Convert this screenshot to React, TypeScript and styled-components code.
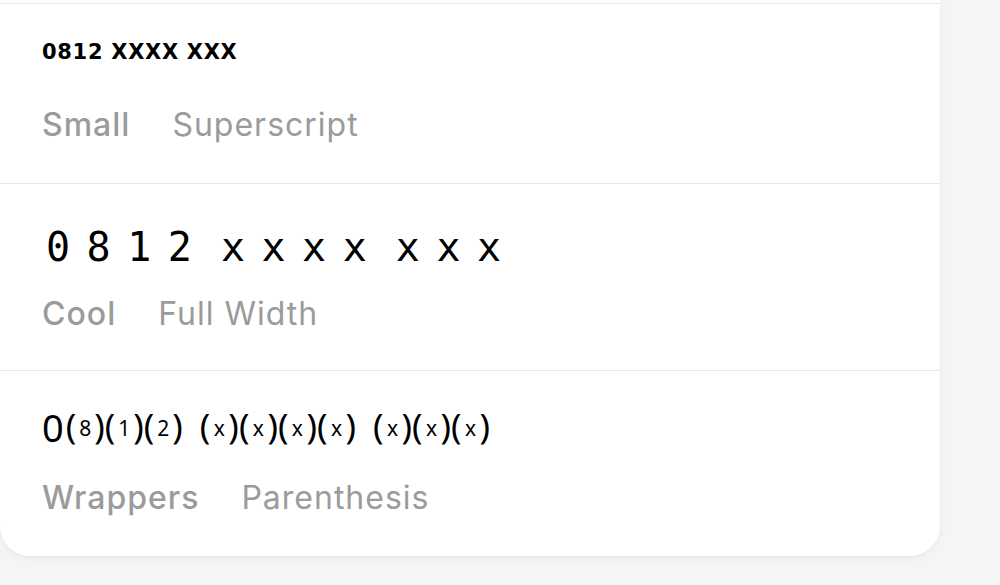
import styled, { createGlobalStyle } from "styled-components";

/*********************  ESTILOS  *********************/
const GlobalStyle = createGlobalStyle`
  html, body {
    margin: 0;
    padding: 0;
    background: #f5f5f5;
  }
  body {
    font-family: "Inter", "Noto Sans", sans-serif;
  }
`;

const Page = styled.div`
  width: 1000px;
  height: 585px;
  overflow: hidden;
  background: #f5f5f5;
`;

const Card = styled.div`
  width: 940px;
  background: #ffffff;
  border-radius: 0 0 30px 30px;
  box-shadow: 0 2px 6px rgba(0, 0, 0, 0.06);
  display: flex;
  flex-direction: column;
`;

const Row = styled.div<{ $top: number; $bottom: number }>`
  border-top: 1px solid #e6e6e6;
  padding: ${(p) => p.$top}px 42px ${(p) => p.$bottom}px;
  display: flex;
  flex-direction: column;
  align-items: flex-start;

  &:first-child {
    margin-top: 3px;
  }
`;

const SmallValue = styled.div`
  font-family: "DejaVu Sans", sans-serif;
  font-weight: 700;
  font-size: 21px;
  line-height: 24px;
  letter-spacing: 0.7px;
  padding-top: 1px;
  color: #000;
`;

const WideValue = styled.div`
  font-family: "DejaVu Sans Mono", monospace;
  font-size: 40px;
  line-height: 46px;
  letter-spacing: 16.5px;
  word-spacing: -28px;
  padding-left: 4px;
  color: #000;
`;

const WrapValue = styled.div`
  font-family: "Noto Sans", sans-serif;
  font-size: 38px;
  line-height: 52px;
  height: 52px;
  white-space: nowrap;
  color: #000;
`;

const Group = styled.span`
  margin-left: 17px;

  &:first-of-type {
    margin-left: 2px;
  }
`;

const Enclosed = styled.span`
  font-size: 35px;
  font-weight: 400;
  line-height: 20px;
  vertical-align: 3px;
`;

const Inner = styled.span`
  display: inline-block;
  width: 18px;
  text-align: center;
  font-size: 21px;
  font-weight: 400;
  line-height: 20px;
  vertical-align: 3px;
`;

const Labels = styled.div<{ $gap: number }>`
  margin-top: ${(p) => p.$gap}px;
  display: flex;
  gap: 42px;
  line-height: 38px;
`;

const Label = styled.span<{ $strong?: boolean }>`
  font-family: "Inter", sans-serif;
  font-size: 32px;
  font-weight: ${(p) => (p.$strong ? 500 : 400)};
  letter-spacing: 1px;
  color: #9b9b9b;
`;

/*********************  LÓGICA  *********************/
const groups = [["8", "1", "2"], ["x", "x", "x", "x"], ["x", "x", "x"]];

export default function App() {
  return (
    <Page>
      <GlobalStyle />
      <Card>
        <Row $top={35} $bottom={39}>
          <SmallValue>0812 XXXX XXX</SmallValue>
          <Labels $gap={42}>
            <Label $strong>Small</Label>
            <Label>Superscript</Label>
          </Labels>
        </Row>
        <Row $top={40} $bottom={37}>
          <WideValue>0812 xxxx xxx</WideValue>
          <Labels $gap={25}>
            <Label $strong>Cool</Label>
            <Label>Full Width</Label>
          </Labels>
        </Row>
        <Row $top={30} $bottom={39}>
          <WrapValue>
            0
            {groups.map((g, i) => (
              <Group key={i}>
                {g.map((c, j) => (
                  <Enclosed key={j}>
                    (<Inner>{c}</Inner>)
                  </Enclosed>
                ))}
              </Group>
            ))}
          </WrapValue>
          <Labels $gap={26}>
            <Label $strong>Wrappers</Label>
            <Label>Parenthesis</Label>
          </Labels>
        </Row>
      </Card>
    </Page>
  );
}
